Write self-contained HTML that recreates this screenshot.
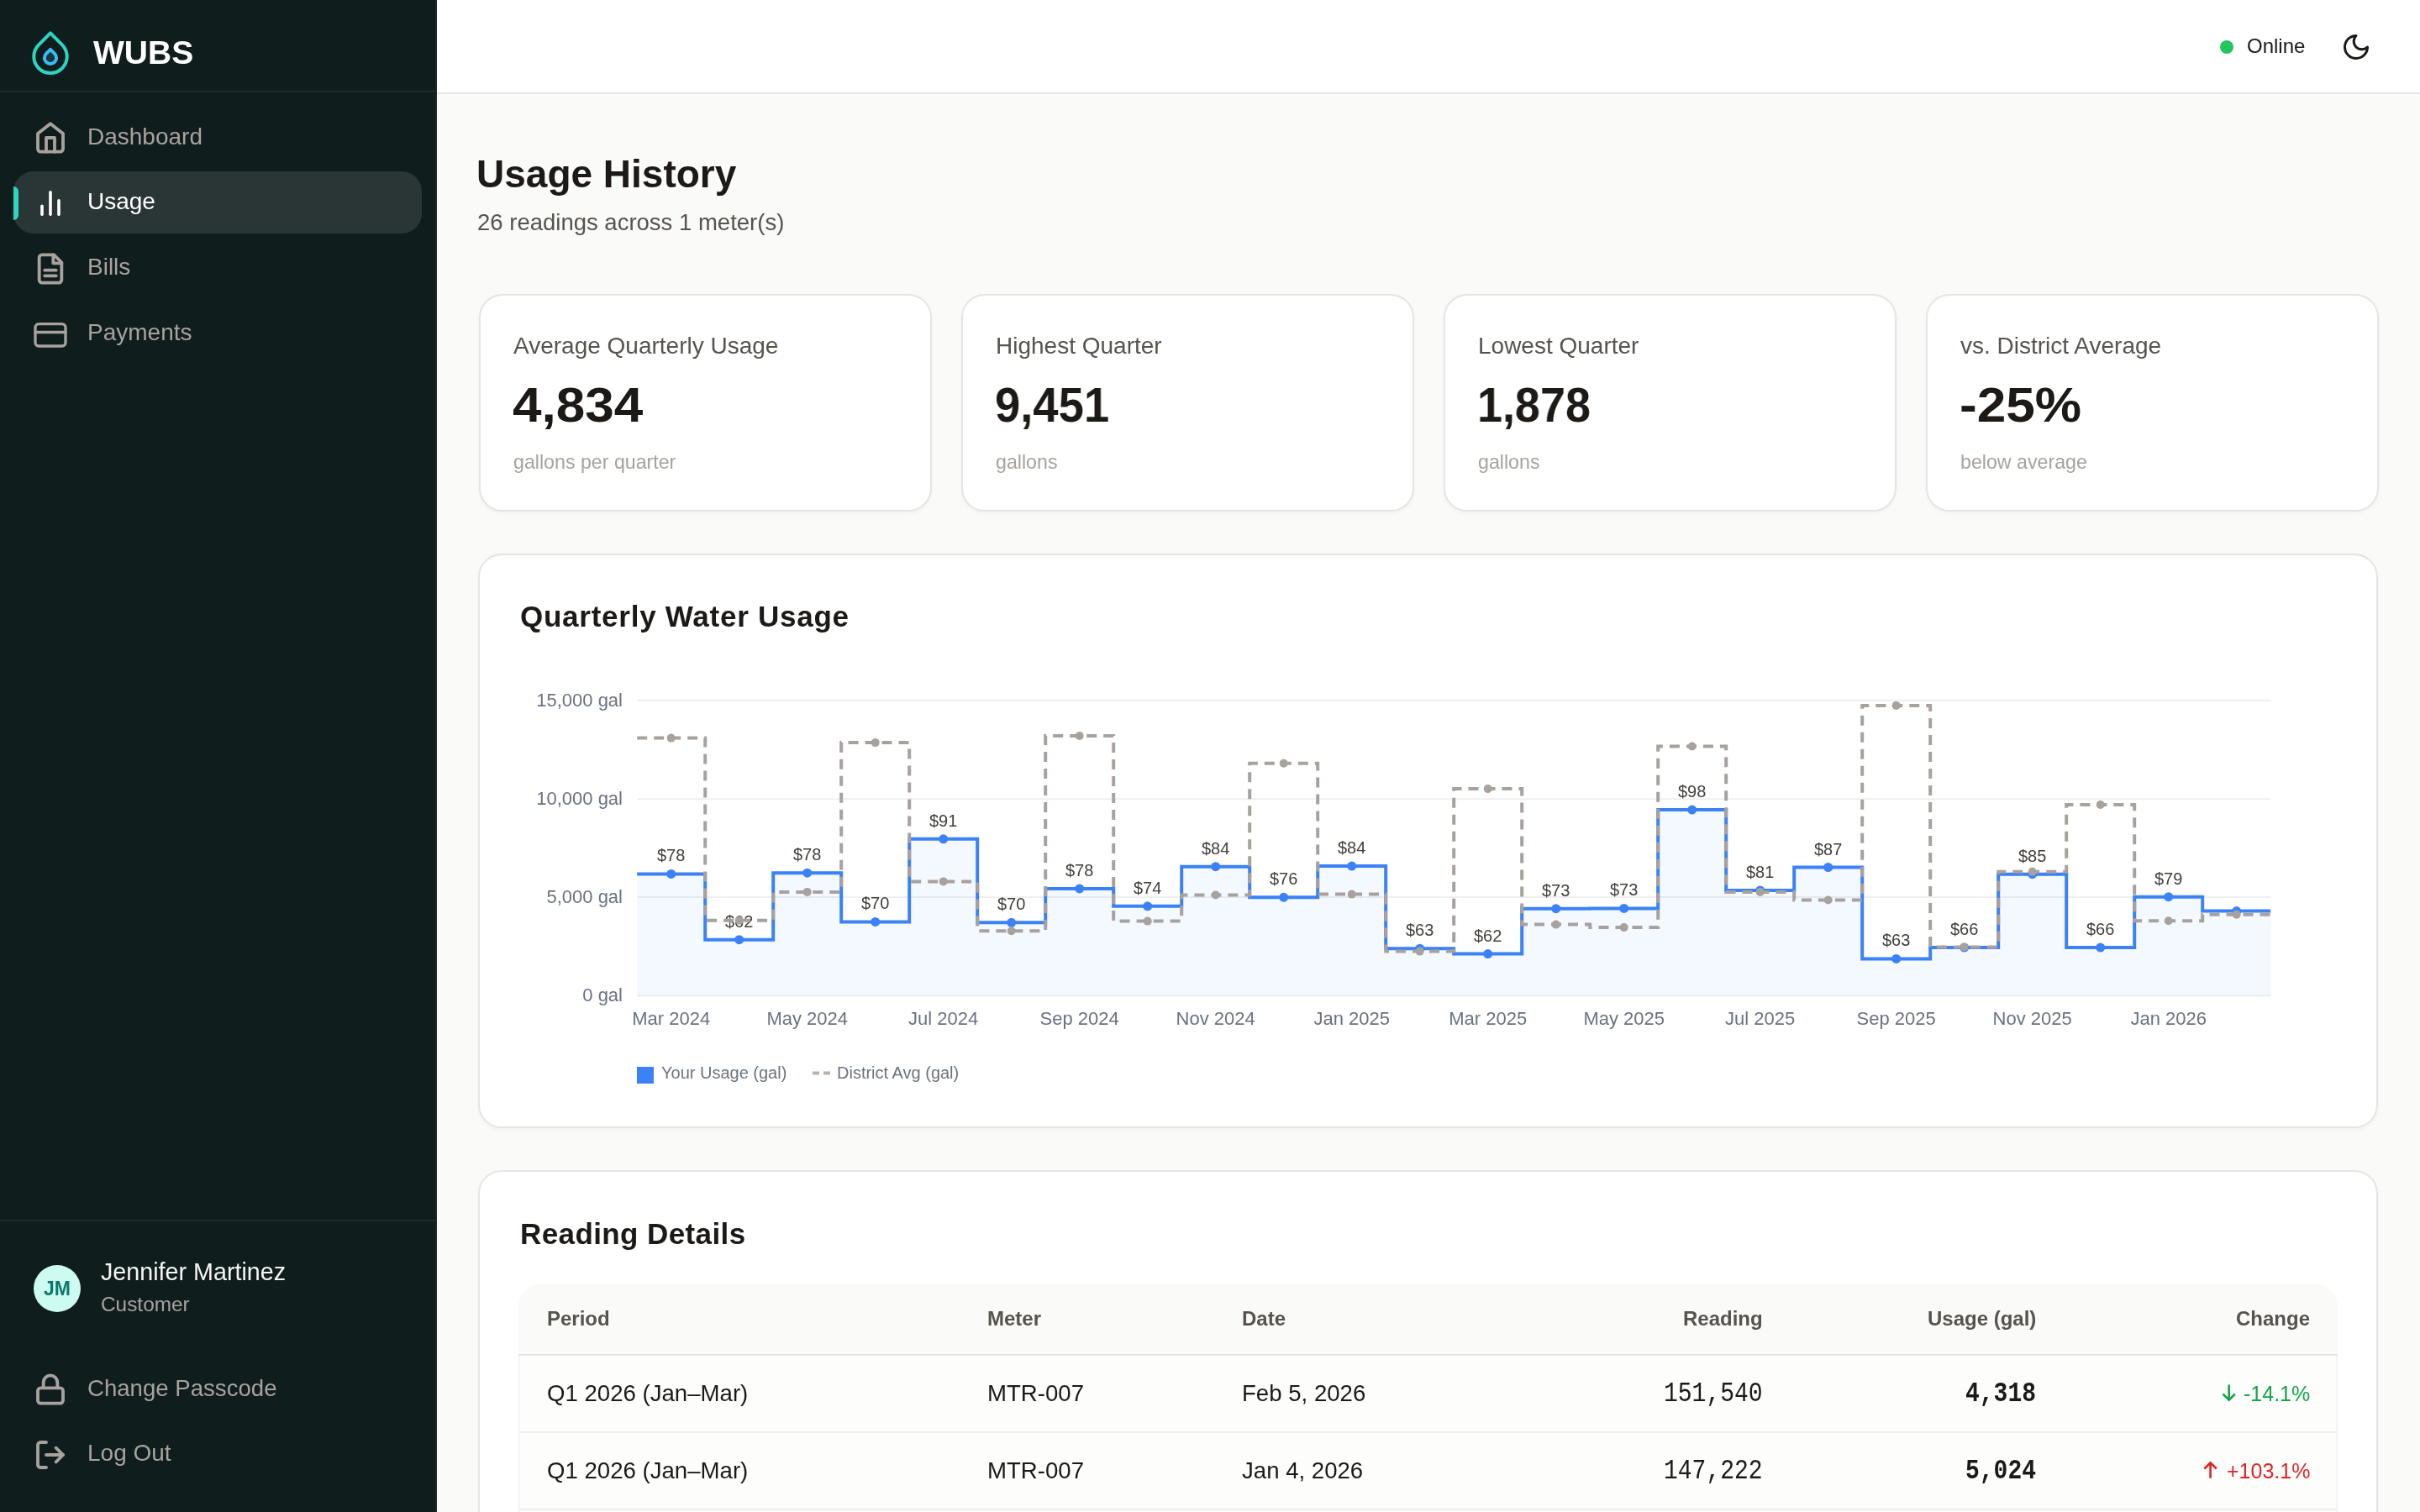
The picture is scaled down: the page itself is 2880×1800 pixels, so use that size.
<!DOCTYPE html>
<html><head><meta charset="utf-8"><title>Usage History</title>
<style>
*{margin:0;padding:0;box-sizing:border-box}
html,body{width:2880px;height:1800px;overflow:hidden;background:#fafaf9;font-family:"Liberation Sans",sans-serif}
@media (max-width:2000px){html{zoom:0.5}}
.t{position:absolute;line-height:1;white-space:nowrap;will-change:transform}
.abs{position:absolute}
#side{position:absolute;left:0;top:0;width:520px;height:1800px;background:#101d1d;border-right:2px solid #1c2929}
#hdr{position:absolute;left:520px;top:0;width:2360px;height:112px;background:#fff;border-bottom:2px solid #e7e5e4}
.card{position:absolute;background:#fff;border:2px solid #e7e5e4;border-radius:28px;box-shadow:0 2px 4px rgba(0,0,0,0.04)}
svg{position:absolute;overflow:visible}
</style></head><body>
<div id="side"></div>
<div class="abs" style="left:0;top:108px;width:518px;height:2px;background:#202d2d"></div>
<div class="abs" style="left:0;top:1452px;width:518px;height:2px;background:#202d2d"></div>
<svg style="left:0;top:0" width="520" height="120" viewBox="0 0 520 120">
<path d="M60.00 39.44 L73.93 53.37 A19.7 19.7 0 1 1 46.07 53.37 Z" fill="none" stroke="#2dd4bf" stroke-width="4" stroke-linejoin="round"/>
<path d="M60.00 58.86 L65.02 63.88 A7.1 7.1 0 1 1 54.98 63.88 Z" fill="#17353b" stroke="#38bdf8" stroke-width="4" stroke-linejoin="round"/>
</svg>
<div class="t" style="top:43.3px;font-size:39px;color:#ffffff;font-weight:700;left:111px;">WUBS</div>
<div class="abs" style="left:16px;top:204px;width:486px;height:74px;border-radius:24px;background:#2a3536"></div>
<div class="abs" style="left:16px;top:222px;width:6px;height:40px;border-radius:0 7px 7px 0;background:#2dd4bf"></div>
<svg style="left:40px;top:144px" width="40" height="40" viewBox="0 0 24 24" fill="none" stroke-linecap="round" stroke-linejoin="round" stroke="#a8a29e" stroke-width="2.3"><path d="m3 9 9-7 9 7v11a2 2 0 0 1-2 2H5a2 2 0 0 1-2-2z"/><path d="M9 22V12h6v10"/></svg>
<svg style="left:40px;top:222px" width="40" height="40" viewBox="0 0 24 24" fill="none" stroke-linecap="round" stroke-linejoin="round" stroke="#ffffff" stroke-width="2.15"><path d="M18 20V10"/><path d="M12 20V4"/><path d="M6 20v-6"/></svg>
<svg style="left:40px;top:300px" width="40" height="40" viewBox="0 0 24 24" fill="none" stroke-linecap="round" stroke-linejoin="round" stroke="#a8a29e" stroke-width="2.3"><path d="M14.5 2H6a2 2 0 0 0-2 2v16a2 2 0 0 0 2 2h12a2 2 0 0 0 2-2V7.5L14.5 2z"/><path d="M14 2v6h6"/><path d="M16 13H8"/><path d="M16 17H8"/></svg>
<svg style="left:40px;top:377.5px" width="40" height="40" viewBox="0 0 24 24" fill="none" stroke-linecap="round" stroke-linejoin="round" stroke="#a8a29e" stroke-width="2.0"><rect width="21.6" height="15.8" x="1.2" y="4.6" rx="2.5"/><path d="M1.2 10.5h21.6"/></svg>
<div class="t" style="top:149.1px;font-size:28px;color:#a8a29e;font-weight:400;left:103.5px;">Dashboard</div>
<div class="t" style="top:225.8px;font-size:28px;color:#ffffff;font-weight:400;left:104px;">Usage</div>
<div class="t" style="top:304.0px;font-size:28px;color:#a8a29e;font-weight:400;left:104px;">Bills</div>
<div class="t" style="top:382.3px;font-size:28px;color:#a8a29e;font-weight:400;left:104px;">Payments</div>
<div class="abs" style="left:40px;top:1505.6px;width:56px;height:56px;border-radius:50%;background:#ccfbf1"></div>
<div class="t" style="top:1522.5px;font-size:23px;color:#0f766e;font-weight:700;left:-932px;width:2000px;text-align:center;">JM</div>
<div class="t" style="top:1500.2px;font-size:28.7px;color:#f5f5f4;font-weight:400;left:120px;">Jennifer Martinez</div>
<div class="t" style="top:1541.3px;font-size:24.4px;color:#a8a29e;font-weight:400;left:120px;">Customer</div>
<svg style="left:40px;top:1634px" width="40" height="40" viewBox="0 0 24 24" fill="none" stroke-linecap="round" stroke-linejoin="round" stroke="#a8a29e" stroke-width="2.3"><rect width="18" height="11" x="3" y="11" rx="2" ry="2"/><path d="M7 11V7a5 5 0 0 1 10 0v4"/></svg>
<svg style="left:40px;top:1712px" width="40" height="40" viewBox="0 0 24 24" fill="none" stroke-linecap="round" stroke-linejoin="round" stroke="#a8a29e" stroke-width="2.3"><path d="M9 21H5a2 2 0 0 1-2-2V5a2 2 0 0 1 2-2h4"/><path d="m16 17 5-5-5-5"/><path d="M21 12H9"/></svg>
<div class="t" style="top:1639.0px;font-size:27.6px;color:#a8a29e;font-weight:400;left:104px;">Change Passcode</div>
<div class="t" style="top:1716.3px;font-size:28px;color:#a8a29e;font-weight:400;left:104px;">Log Out</div>
<div id="hdr"></div>
<div class="abs" style="left:2642px;top:48px;width:16px;height:16px;border-radius:50%;background:#22c55e"></div>
<div class="t" style="top:43.3px;font-size:24px;color:#1c1917;font-weight:400;left:2674px;">Online</div>
<svg style="left:2786px;top:38px" width="36" height="36" viewBox="0 0 24 24" fill="none" stroke-linecap="round" stroke-linejoin="round" stroke="#1c1917" stroke-width="2"><path d="M12 3a6 6 0 0 0 9 9 9 9 0 1 1-9-9Z"/></svg>
<div class="t" style="top:183.8px;font-size:46px;color:#1c1917;font-weight:700;left:567px;">Usage History</div>
<div class="t" style="top:250.7px;font-size:27.5px;color:#57534e;font-weight:400;left:568px;">26 readings across 1 meter(s)</div>
<div class="card" style="left:569.5px;top:350px;width:539px;height:259px"></div>
<div class="t" style="top:398.4px;font-size:28px;color:#57534e;font-weight:400;left:610.5px;">Average Quarterly Usage</div>
<div class="t" style="top:453.2px;font-size:58px;color:#1c1917;font-weight:700;left:610.0px;transform:scaleX(1.069);transform-origin:0 0;">4,834</div>
<div class="t" style="top:538.6px;font-size:23.2px;color:#a8a29e;font-weight:400;left:610.5px;">gallons per quarter</div>
<div class="card" style="left:1143.5px;top:350px;width:539px;height:259px"></div>
<div class="t" style="top:398.4px;font-size:28px;color:#57534e;font-weight:400;left:1184.5px;">Highest Quarter</div>
<div class="t" style="top:453.2px;font-size:58px;color:#1c1917;font-weight:700;left:1184.0px;transform:scaleX(0.937);transform-origin:0 0;">9,451</div>
<div class="t" style="top:538.6px;font-size:23.2px;color:#a8a29e;font-weight:400;left:1184.5px;">gallons</div>
<div class="card" style="left:1717.5px;top:350px;width:539px;height:259px"></div>
<div class="t" style="top:398.4px;font-size:28px;color:#57534e;font-weight:400;left:1758.5px;">Lowest Quarter</div>
<div class="t" style="top:453.2px;font-size:58px;color:#1c1917;font-weight:700;left:1758.0px;transform:scaleX(0.929);transform-origin:0 0;">1,878</div>
<div class="t" style="top:538.6px;font-size:23.2px;color:#a8a29e;font-weight:400;left:1758.5px;">gallons</div>
<div class="card" style="left:2291.5px;top:350px;width:539px;height:259px"></div>
<div class="t" style="top:398.4px;font-size:28px;color:#57534e;font-weight:400;left:2332.5px;">vs. District Average</div>
<div class="t" style="top:453.2px;font-size:58px;color:#1c1917;font-weight:700;left:2332.0px;transform:scaleX(1.072);transform-origin:0 0;">-25%</div>
<div class="t" style="top:538.6px;font-size:23.2px;color:#a8a29e;font-weight:400;left:2332.5px;">below average</div>
<div class="card" style="left:569px;top:659px;width:2261px;height:684px"></div>
<div class="t" style="top:716.2px;font-size:35px;color:#1c1917;font-weight:700;letter-spacing:0.75px;left:619px;">Quarterly Water Usage</div>
<svg style="left:0;top:0" width="2880" height="1800" viewBox="0 0 2880 1800">
<line x1="758.2" x2="2702.2" y1="834" y2="834" stroke="#efeff1" stroke-width="2"/>
<line x1="758.2" x2="2702.2" y1="951.3" y2="951.3" stroke="#efeff1" stroke-width="2"/>
<line x1="758.2" x2="2702.2" y1="1068" y2="1068" stroke="#efeff1" stroke-width="2"/>
<line x1="758.2" x2="2702.2" y1="1185.6" y2="1185.6" stroke="#efeff1" stroke-width="2"/>
<path d="M758.2 1040.4 H839.2 V1118.7 H920.2 V1039.2 H1001.2 V1097.4 H1082.2 V998.8 H1163.2 V1098.3 H1244.2 V1057.9 H1325.2 V1078.8 H1406.2 V1031.7 H1487.2 V1068.3 H1568.2 V1031.1 H1649.2 V1129.2 H1730.2 V1135.6 H1811.2 V1081.7 H1892.2 V1081.4 H1973.2 V964.1 H2054.2 V1059.9 H2135.2 V1032.5 H2216.2 V1141.4 H2297.2 V1128.0 H2378.2 V1040.7 H2459.2 V1128.0 H2540.2 V1067.7 H2621.2 V1084.6 H2702.2 V1185.6 H758.2 Z" fill="#3b82f6" fill-opacity="0.055"/>
<path d="M758.2 1040.4 H839.2 V1118.7 H920.2 V1039.2 H1001.2 V1097.4 H1082.2 V998.8 H1163.2 V1098.3 H1244.2 V1057.9 H1325.2 V1078.8 H1406.2 V1031.7 H1487.2 V1068.3 H1568.2 V1031.1 H1649.2 V1129.2 H1730.2 V1135.6 H1811.2 V1081.7 H1892.2 V1081.4 H1973.2 V964.1 H2054.2 V1059.9 H2135.2 V1032.5 H2216.2 V1141.4 H2297.2 V1128.0 H2378.2 V1040.7 H2459.2 V1128.0 H2540.2 V1067.7 H2621.2 V1084.6 H2702.2" fill="none" stroke="#3b82f6" stroke-width="4"/>
<circle cx="798.7" cy="1040.4" r="5.5" fill="#3b82f6"/>
<circle cx="879.7" cy="1118.7" r="5.5" fill="#3b82f6"/>
<circle cx="960.7" cy="1039.2" r="5.5" fill="#3b82f6"/>
<circle cx="1041.7" cy="1097.4" r="5.5" fill="#3b82f6"/>
<circle cx="1122.7" cy="998.8" r="5.5" fill="#3b82f6"/>
<circle cx="1203.7" cy="1098.3" r="5.5" fill="#3b82f6"/>
<circle cx="1284.7" cy="1057.9" r="5.5" fill="#3b82f6"/>
<circle cx="1365.7" cy="1078.8" r="5.5" fill="#3b82f6"/>
<circle cx="1446.7" cy="1031.7" r="5.5" fill="#3b82f6"/>
<circle cx="1527.7" cy="1068.3" r="5.5" fill="#3b82f6"/>
<circle cx="1608.7" cy="1031.1" r="5.5" fill="#3b82f6"/>
<circle cx="1689.7" cy="1129.2" r="5.5" fill="#3b82f6"/>
<circle cx="1770.7" cy="1135.6" r="5.5" fill="#3b82f6"/>
<circle cx="1851.7" cy="1081.7" r="5.5" fill="#3b82f6"/>
<circle cx="1932.7" cy="1081.4" r="5.5" fill="#3b82f6"/>
<circle cx="2013.7" cy="964.1" r="5.5" fill="#3b82f6"/>
<circle cx="2094.7" cy="1059.9" r="5.5" fill="#3b82f6"/>
<circle cx="2175.7" cy="1032.5" r="5.5" fill="#3b82f6"/>
<circle cx="2256.7" cy="1141.4" r="5.5" fill="#3b82f6"/>
<circle cx="2337.7" cy="1128" r="5.5" fill="#3b82f6"/>
<circle cx="2418.7" cy="1040.7" r="5.5" fill="#3b82f6"/>
<circle cx="2499.7" cy="1128" r="5.5" fill="#3b82f6"/>
<circle cx="2580.7" cy="1067.7" r="5.5" fill="#3b82f6"/>
<circle cx="2661.7" cy="1084.6" r="5.5" fill="#3b82f6"/>
<text x="798.7" y="1025.4" text-anchor="middle" font-size="20" fill="#44403c" font-family="Liberation Sans, sans-serif">$78</text>
<text x="879.7" y="1103.7" text-anchor="middle" font-size="20" fill="#44403c" font-family="Liberation Sans, sans-serif">$62</text>
<text x="960.7" y="1024.2" text-anchor="middle" font-size="20" fill="#44403c" font-family="Liberation Sans, sans-serif">$78</text>
<text x="1041.7" y="1082.4" text-anchor="middle" font-size="20" fill="#44403c" font-family="Liberation Sans, sans-serif">$70</text>
<text x="1122.7" y="983.8" text-anchor="middle" font-size="20" fill="#44403c" font-family="Liberation Sans, sans-serif">$91</text>
<text x="1203.7" y="1083.3" text-anchor="middle" font-size="20" fill="#44403c" font-family="Liberation Sans, sans-serif">$70</text>
<text x="1284.7" y="1042.9" text-anchor="middle" font-size="20" fill="#44403c" font-family="Liberation Sans, sans-serif">$78</text>
<text x="1365.7" y="1063.8" text-anchor="middle" font-size="20" fill="#44403c" font-family="Liberation Sans, sans-serif">$74</text>
<text x="1446.7" y="1016.7" text-anchor="middle" font-size="20" fill="#44403c" font-family="Liberation Sans, sans-serif">$84</text>
<text x="1527.7" y="1053.3" text-anchor="middle" font-size="20" fill="#44403c" font-family="Liberation Sans, sans-serif">$76</text>
<text x="1608.7" y="1016.1" text-anchor="middle" font-size="20" fill="#44403c" font-family="Liberation Sans, sans-serif">$84</text>
<text x="1689.7" y="1114.2" text-anchor="middle" font-size="20" fill="#44403c" font-family="Liberation Sans, sans-serif">$63</text>
<text x="1770.7" y="1120.6" text-anchor="middle" font-size="20" fill="#44403c" font-family="Liberation Sans, sans-serif">$62</text>
<text x="1851.7" y="1066.7" text-anchor="middle" font-size="20" fill="#44403c" font-family="Liberation Sans, sans-serif">$73</text>
<text x="1932.7" y="1066.4" text-anchor="middle" font-size="20" fill="#44403c" font-family="Liberation Sans, sans-serif">$73</text>
<text x="2013.7" y="949.1" text-anchor="middle" font-size="20" fill="#44403c" font-family="Liberation Sans, sans-serif">$98</text>
<text x="2094.7" y="1044.9" text-anchor="middle" font-size="20" fill="#44403c" font-family="Liberation Sans, sans-serif">$81</text>
<text x="2175.7" y="1017.5" text-anchor="middle" font-size="20" fill="#44403c" font-family="Liberation Sans, sans-serif">$87</text>
<text x="2256.7" y="1126.4" text-anchor="middle" font-size="20" fill="#44403c" font-family="Liberation Sans, sans-serif">$63</text>
<text x="2337.7" y="1113.0" text-anchor="middle" font-size="20" fill="#44403c" font-family="Liberation Sans, sans-serif">$66</text>
<text x="2418.7" y="1025.7" text-anchor="middle" font-size="20" fill="#44403c" font-family="Liberation Sans, sans-serif">$85</text>
<text x="2499.7" y="1113.0" text-anchor="middle" font-size="20" fill="#44403c" font-family="Liberation Sans, sans-serif">$66</text>
<text x="2580.7" y="1052.7" text-anchor="middle" font-size="20" fill="#44403c" font-family="Liberation Sans, sans-serif">$79</text>
<path d="M758.2 878.6 H839.2 V1095.7 H920.2 V1061.9 H1001.2 V884.1 H1082.2 V1049.4 H1163.2 V1108.2 H1244.2 V876.0 H1325.2 V1096.6 H1406.2 V1065.4 H1487.2 V908.8 H1568.2 V1064.6 H1649.2 V1132.6 H1730.2 V939.1 H1811.2 V1100.6 H1892.2 V1104.1 H1973.2 V888.5 H2054.2 V1061.9 H2135.2 V1071.5 H2216.2 V839.9 H2297.2 V1127.4 H2378.2 V1037.8 H2459.2 V958.0 H2540.2 V1096.3 H2621.2 V1088.7 H2702.2" fill="none" stroke="#a8a29e" stroke-width="4" stroke-dasharray="12 8"/>
<circle cx="798.7" cy="878.6" r="5" fill="#a8a29e"/>
<circle cx="879.7" cy="1095.7" r="5" fill="#a8a29e"/>
<circle cx="960.7" cy="1061.9" r="5" fill="#a8a29e"/>
<circle cx="1041.7" cy="884.1" r="5" fill="#a8a29e"/>
<circle cx="1122.7" cy="1049.4" r="5" fill="#a8a29e"/>
<circle cx="1203.7" cy="1108.2" r="5" fill="#a8a29e"/>
<circle cx="1284.7" cy="876.0" r="5" fill="#a8a29e"/>
<circle cx="1365.7" cy="1096.6" r="5" fill="#a8a29e"/>
<circle cx="1446.7" cy="1065.4" r="5" fill="#a8a29e"/>
<circle cx="1527.7" cy="908.8" r="5" fill="#a8a29e"/>
<circle cx="1608.7" cy="1064.6" r="5" fill="#a8a29e"/>
<circle cx="1689.7" cy="1132.6" r="5" fill="#a8a29e"/>
<circle cx="1770.7" cy="939.1" r="5" fill="#a8a29e"/>
<circle cx="1851.7" cy="1100.6" r="5" fill="#a8a29e"/>
<circle cx="1932.7" cy="1104.1" r="5" fill="#a8a29e"/>
<circle cx="2013.7" cy="888.5" r="5" fill="#a8a29e"/>
<circle cx="2094.7" cy="1061.9" r="5" fill="#a8a29e"/>
<circle cx="2175.7" cy="1071.5" r="5" fill="#a8a29e"/>
<circle cx="2256.7" cy="839.9" r="5" fill="#a8a29e"/>
<circle cx="2337.7" cy="1127.4" r="5" fill="#a8a29e"/>
<circle cx="2418.7" cy="1037.8" r="5" fill="#a8a29e"/>
<circle cx="2499.7" cy="958" r="5" fill="#a8a29e"/>
<circle cx="2580.7" cy="1096.3" r="5" fill="#a8a29e"/>
<circle cx="2661.7" cy="1088.7" r="5" fill="#a8a29e"/>
<text x="741" y="840.5" text-anchor="end" font-size="22" fill="#6b7280" font-family="Liberation Sans, sans-serif">15,000 gal</text>
<text x="741" y="957.8" text-anchor="end" font-size="22" fill="#6b7280" font-family="Liberation Sans, sans-serif">10,000 gal</text>
<text x="741" y="1074.5" text-anchor="end" font-size="22" fill="#6b7280" font-family="Liberation Sans, sans-serif">5,000 gal</text>
<text x="741" y="1192.1" text-anchor="end" font-size="22" fill="#6b7280" font-family="Liberation Sans, sans-serif">0 gal</text>
<text x="798.7" y="1220.4" text-anchor="middle" font-size="22" fill="#6b7280" font-family="Liberation Sans, sans-serif">Mar 2024</text>
<text x="960.7" y="1220.4" text-anchor="middle" font-size="22" fill="#6b7280" font-family="Liberation Sans, sans-serif">May 2024</text>
<text x="1122.7" y="1220.4" text-anchor="middle" font-size="22" fill="#6b7280" font-family="Liberation Sans, sans-serif">Jul 2024</text>
<text x="1284.7" y="1220.4" text-anchor="middle" font-size="22" fill="#6b7280" font-family="Liberation Sans, sans-serif">Sep 2024</text>
<text x="1446.7" y="1220.4" text-anchor="middle" font-size="22" fill="#6b7280" font-family="Liberation Sans, sans-serif">Nov 2024</text>
<text x="1608.7" y="1220.4" text-anchor="middle" font-size="22" fill="#6b7280" font-family="Liberation Sans, sans-serif">Jan 2025</text>
<text x="1770.7" y="1220.4" text-anchor="middle" font-size="22" fill="#6b7280" font-family="Liberation Sans, sans-serif">Mar 2025</text>
<text x="1932.7" y="1220.4" text-anchor="middle" font-size="22" fill="#6b7280" font-family="Liberation Sans, sans-serif">May 2025</text>
<text x="2094.7" y="1220.4" text-anchor="middle" font-size="22" fill="#6b7280" font-family="Liberation Sans, sans-serif">Jul 2025</text>
<text x="2256.7" y="1220.4" text-anchor="middle" font-size="22" fill="#6b7280" font-family="Liberation Sans, sans-serif">Sep 2025</text>
<text x="2418.7" y="1220.4" text-anchor="middle" font-size="22" fill="#6b7280" font-family="Liberation Sans, sans-serif">Nov 2025</text>
<text x="2580.7" y="1220.4" text-anchor="middle" font-size="22" fill="#6b7280" font-family="Liberation Sans, sans-serif">Jan 2026</text>
<rect x="758" y="1270" width="20" height="20" fill="#3b82f6"/>
<text x="787" y="1283.7" font-size="20" fill="#6b7280" font-family="Liberation Sans, sans-serif">Your Usage (gal)</text>
<line x1="967" x2="988" y1="1277.6" y2="1277.6" stroke="#b8b2ad" stroke-width="4" stroke-dasharray="8 5"/>
<text x="996" y="1283.7" font-size="20" fill="#6b7280" font-family="Liberation Sans, sans-serif">District Avg (gal)</text>
</svg>
<div class="card" style="left:569px;top:1393px;width:2261px;height:600px"></div>
<div class="t" style="top:1450.8px;font-size:35px;color:#1c1917;font-weight:700;letter-spacing:0.4px;left:619px;">Reading Details</div>
<div class="abs" style="left:617px;top:1527.5px;width:2165px;height:86px;background:#fafaf9;border-radius:28px 28px 0 0;border-bottom:2px solid #e7e5e4"></div>
<div class="abs" style="left:617px;top:1614px;width:2165px;height:200px;background:#fdfdfc;border-left:2px solid #f6f5f4;border-right:2px solid #f6f5f4"></div>
<div class="abs" style="left:617px;top:1704px;width:2165px;height:2px;background:#f0efee"></div>
<div class="abs" style="left:617px;top:1796px;width:2165px;height:2px;background:#f0efee"></div>
<div class="t" style="top:1558.0px;font-size:24px;color:#57534e;font-weight:700;left:651px;">Period</div>
<div class="t" style="top:1558.0px;font-size:24px;color:#57534e;font-weight:700;left:1174.5px;">Meter</div>
<div class="t" style="top:1558.0px;font-size:24px;color:#57534e;font-weight:700;left:1478px;">Date</div>
<div class="t" style="top:1558.0px;font-size:24px;color:#57534e;font-weight:700;right:782px;">Reading</div>
<div class="t" style="top:1558.0px;font-size:24px;color:#57534e;font-weight:700;right:457px;">Usage (gal)</div>
<div class="t" style="top:1558.0px;font-size:24px;color:#57534e;font-weight:700;right:131px;">Change</div>
<div class="t" style="top:1644.6px;font-size:27.6px;color:#1c1917;font-weight:400;left:651px;">Q1 2026 (Jan–Mar)</div>
<div class="t" style="top:1644.6px;font-size:27.6px;color:#1c1917;font-weight:400;left:1174.5px;">MTR-007</div>
<div class="t" style="top:1644.6px;font-size:27.6px;color:#1c1917;font-weight:400;left:1478px;">Feb 5, 2026</div>
<div class="t" style="top:1646.5px;font-size:28px;color:#1c1917;font-weight:400;font-family:'Liberation Mono', monospace;right:782px;transform:scaleY(1.16);transform-origin:0 0.766em;">151,540</div>
<div class="t" style="top:1646.5px;font-size:28px;color:#1c1917;font-weight:700;font-family:'Liberation Mono', monospace;right:457px;transform:scaleY(1.16);transform-origin:0 0.766em;">4,318</div>
<div class="t" style="top:1646.8px;font-size:25px;color:#16a34a;font-weight:400;right:131px;">-14.1%</div>
<svg style="left:0;top:0" width="2880" height="1800" viewBox="0 0 2880 1800"><path d="M2652.7 1648.4 V1667 M2645.5 1659.5 L2652.7 1666.7 L2659.9 1659.5" fill="none" stroke="#16a34a" stroke-width="2.6" stroke-linecap="butt" stroke-linejoin="miter"/></svg>
<div class="t" style="top:1736.6px;font-size:27.6px;color:#1c1917;font-weight:400;left:651px;">Q1 2026 (Jan–Mar)</div>
<div class="t" style="top:1736.6px;font-size:27.6px;color:#1c1917;font-weight:400;left:1174.5px;">MTR-007</div>
<div class="t" style="top:1736.6px;font-size:27.6px;color:#1c1917;font-weight:400;left:1478px;">Jan 4, 2026</div>
<div class="t" style="top:1738.5px;font-size:28px;color:#1c1917;font-weight:400;font-family:'Liberation Mono', monospace;right:782px;transform:scaleY(1.16);transform-origin:0 0.766em;">147,222</div>
<div class="t" style="top:1738.5px;font-size:28px;color:#1c1917;font-weight:700;font-family:'Liberation Mono', monospace;right:457px;transform:scaleY(1.16);transform-origin:0 0.766em;">5,024</div>
<div class="t" style="top:1738.8px;font-size:25px;color:#dc2626;font-weight:400;right:131px;">+103.1%</div>
<svg style="left:0;top:0" width="2880" height="1800" viewBox="0 0 2880 1800"><path d="M2630.6 1759.8 V1741.2 M2623.4 1748.5 L2630.6 1741.3 L2637.8 1748.5" fill="none" stroke="#dc2626" stroke-width="2.6" stroke-linecap="butt" stroke-linejoin="miter"/></svg>
</body></html>
